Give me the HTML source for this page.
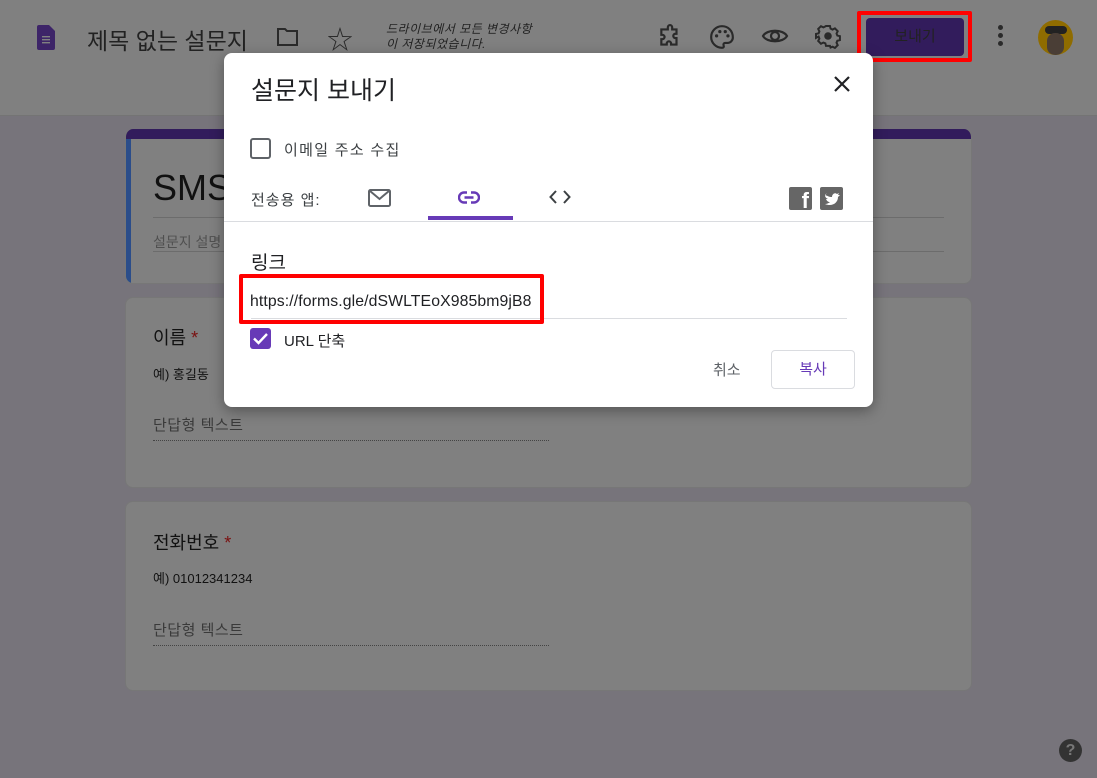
<!DOCTYPE html>
<html><head><meta charset="utf-8"><style>
*{box-sizing:border-box;margin:0;padding:0}
body{width:1097px;height:778px;overflow:hidden;background:#77747b;font-family:"Liberation Sans","Noto Sans CJK KR",sans-serif;position:relative;color:#202124}
.hdr{position:absolute;left:0;top:0;width:1097px;height:116px;background:#808080;border-bottom:1px solid #747474}
.abs{position:absolute}
.card{position:absolute;left:125px;width:847px;background:#808080;border-radius:8px;border:1px solid #777}
.dlg{position:absolute;left:224px;top:53px;width:649px;height:354px;background:#fff;border-radius:8px;box-shadow:0 4px 14px rgba(0,0,0,.35)}
</style></head><body>
<div class="hdr">
  <svg class="abs" style="left:37px;top:25px" width="18" height="25" viewBox="0 0 18 25"><path d="M2 0h10l6 6v17a2 2 0 0 1-2 2H2a2 2 0 0 1-2-2V2a2 2 0 0 1 2-2z" fill="#3d2468"/><g fill="#808080"><rect x="5" y="11" width="8" height="1.4"/><rect x="5" y="14" width="8" height="1.4"/><rect x="5" y="17" width="8" height="1.4"/></g></svg>
  <div class="abs" style="left:87px;top:22px;font-size:23px;color:#222">제목 없는 설문지</div>
  <svg class="abs" style="left:276px;top:26px" width="24" height="22" viewBox="0 0 24 22"><path d="M2 3h7l2 2h10v14H2z" fill="none" stroke="#2a2a2a" stroke-width="2"/></svg>
  <div class="abs" style="left:327px;top:20px;font-size:26px;color:#2a2a2a">☆</div>
  <div class="abs" style="left:386px;top:22px;font-size:12px;font-style:italic;color:#222;line-height:15px;letter-spacing:.5px">드라이브에서 모든 변경사항<br>이 저장되었습니다.</div>
  <svg class="abs" style="left:657px;top:24px" width="26" height="26" viewBox="0 0 24 24"><path d="M10 3a2 2 0 0 1 4 0v2h4v4h-1a2 2 0 0 0 0 4h1v6h-5v-1a2 2 0 0 0-4 0v1H4v-5h1a2 2 0 0 0 0-4H4V5h6z" fill="none" stroke="#2a2a2a" stroke-width="2"/></svg>
  <svg class="abs" style="left:709px;top:24px" width="26" height="26" viewBox="0 0 24 24"><path d="M12 2a10 10 0 0 0 0 20c1.5 0 2-1 1.5-2s0-2.5 1.5-2.5H17a5 5 0 0 0 5-5C22 6 17.5 2 12 2z" fill="none" stroke="#2a2a2a" stroke-width="2"/><circle cx="7" cy="11" r="1.5" fill="#2a2a2a"/><circle cx="10" cy="7" r="1.5" fill="#2a2a2a"/><circle cx="15" cy="7" r="1.5" fill="#2a2a2a"/><circle cx="17.5" cy="11" r="1.5" fill="#2a2a2a"/></svg>
  <svg class="abs" style="left:761px;top:24px" width="28" height="24" viewBox="0 0 28 24"><path d="M2 12C6 5 22 5 26 12C22 19 6 19 2 12z" fill="none" stroke="#2a2a2a" stroke-width="2.2"/><circle cx="14" cy="12" r="4" fill="none" stroke="#2a2a2a" stroke-width="2.2"/></svg>
  <svg class="abs" style="left:815px;top:23px" width="26" height="26" viewBox="0 0 24 24"><path d="M10 2h4l.6 2.6 2 1 2.4-1.2 2.8 2.8-1.2 2.4.8 2 2.6.6v4l-2.6.6-.8 2 1.2 2.4-2.8 2.8-2.4-1.2-2 .8L14 22h-4l-.6-2.6-2-.8-2.4 1.2-2.8-2.8 1.2-2.4-.8-2L0 14v-4l2.6-.6.8-2-1.2-2.4 2.8-2.8 2.4 1.2 2-1z" transform="scale(.92) translate(1 1)" fill="none" stroke="#2a2a2a" stroke-width="2"/><circle cx="12" cy="12" r="3.5" fill="#2a2a2a"/></svg>
  <div class="abs" style="left:857px;top:11px;width:115px;height:51px;border:4px solid #f00;border-radius:2px"></div>
  <div class="abs" style="left:866px;top:18px;width:98px;height:38px;background:#321c5c;border-radius:4px;color:#222;font-size:15px;text-align:center;line-height:38px">보내기</div>
  <div class="abs" style="left:998px;top:25px;width:5px"><div style="width:5px;height:5px;border-radius:50%;background:#2a2a2a;margin-bottom:3px"></div><div style="width:5px;height:5px;border-radius:50%;background:#2a2a2a;margin-bottom:3px"></div><div style="width:5px;height:5px;border-radius:50%;background:#2a2a2a"></div></div>
  <div class="abs" style="left:1038px;top:20px;width:35px;height:35px;border-radius:50%;background:#8f6c00;overflow:hidden"><div style="position:absolute;left:7px;top:6px;width:22px;height:8px;background:#222;border-radius:4px"></div><div style="position:absolute;left:9px;top:13px;width:17px;height:22px;background:#4a3e36;border-radius:8px"></div></div>
</div>

<div class="card" style="top:129px;height:155px;border-top:none;overflow:hidden">
  <div style="position:absolute;left:0;top:0;width:100%;height:10px;background:#321c5c"></div>
  <div style="position:absolute;left:0;top:10px;width:5px;height:150px;background:#2b4d8a"></div>
  <div style="position:absolute;left:27px;top:38px;font-size:36px;color:#111">SMS</div>
  <div style="position:absolute;left:27px;top:88px;width:791px;border-top:1px solid #6c6c6c"></div>
  <div style="position:absolute;left:27px;top:103px;font-size:14px;color:#505050">설문지 설명</div>
  <div style="position:absolute;left:27px;top:122px;width:791px;border-top:1px solid #6c6c6c"></div>
</div>
<div class="card" style="top:297px;height:191px">
  <div class="abs" style="left:27px;top:26px;font-size:18px;color:#111">이름 <span style="color:#7a1010">*</span></div>
  <div class="abs" style="left:27px;top:66px;font-size:13px;color:#111">예) 홍길동</div>
  <div class="abs" style="left:27px;top:116px;font-size:15px;color:#3a3a3a;letter-spacing:.5px">단답형 텍스트</div>
  <div class="abs" style="left:27px;top:142px;width:396px;border-top:1px dotted #444"></div>
</div>
<div class="card" style="top:501px;height:190px">
  <div class="abs" style="left:27px;top:27px;font-size:18px;color:#111">전화번호 <span style="color:#7a1010">*</span></div>
  <div class="abs" style="left:27px;top:66px;font-size:13px;color:#111">예) 01012341234</div>
  <div class="abs" style="left:27px;top:117px;font-size:15px;color:#3a3a3a;letter-spacing:.5px">단답형 텍스트</div>
  <div class="abs" style="left:27px;top:143px;width:396px;border-top:1px dotted #444"></div>
</div>
<div class="abs" style="left:1059px;top:739px;width:23px;height:23px;border-radius:50%;background:#333;color:#777;font-weight:bold;font-size:16px;text-align:center;line-height:23px">?</div>

<div class="dlg">
  <div class="abs" style="left:27px;top:18px;font-size:25px;color:#202124">설문지 보내기</div>
  <svg class="abs" style="left:610px;top:23px" width="16" height="16" viewBox="0 0 16 16"><path d="M1 1L15 15M15 1L1 15" stroke="#202124" stroke-width="2.2"/></svg>
  <div class="abs" style="left:26px;top:85px;width:21px;height:21px;border:2px solid #5f6368;border-radius:3px"></div>
  <div class="abs" style="left:60px;top:86px;font-size:15px;color:#3c4043;letter-spacing:1.3px">이메일 주소 수집</div>
  <div class="abs" style="left:27px;top:136px;font-size:15px;color:#3c4043;letter-spacing:1px">전송용 앱:</div>
  <svg class="abs" style="left:144px;top:136px" width="23" height="18" viewBox="0 0 23 18"><rect x="1" y="1" width="21" height="16" rx="1.5" fill="none" stroke="#5f6368" stroke-width="2"/><path d="M2 2l9.5 8L21 2" fill="none" stroke="#5f6368" stroke-width="2"/></svg>
  <svg class="abs" style="left:234px;top:138px" width="22" height="13" viewBox="0 0 22 13"><path d="M9 1.5H6a5 5 0 0 0 0 10h3M13 1.5h3a5 5 0 0 1 0 10h-3M6.5 6.5h9" fill="none" stroke="#673ab7" stroke-width="2.4"/></svg>
  <div class="abs" style="left:204px;top:163px;width:85px;height:4px;background:#673ab7"></div>
  <svg class="abs" style="left:325px;top:137px" width="22" height="14" viewBox="0 0 22 14"><path d="M7 1L1.5 7 7 13M15 1l5.5 6-5.5 6" fill="none" stroke="#3c4043" stroke-width="2"/></svg>
  <div class="abs" style="left:565px;top:134px;width:23px;height:23px;background:#666;border-radius:2px;color:#fff;font-weight:bold;font-size:22px;text-align:right;line-height:28px;padding-right:3px;overflow:hidden">f</div>
  <svg class="abs" style="left:596px;top:134px" width="23" height="23" viewBox="0 0 23 23"><rect width="23" height="23" rx="2" fill="#666"/><path d="M5 7c2 2 4 3 7 3 0-3 3-5 5-3l2-1-1 2 2 0-2 2c0 6-6 10-13 7 2 0 4-1 5-2-2 0-3-1-4-3h2c-2-1-3-2-3-4l2 1c-1-1-2-3 0-2z" fill="#fff"/></svg>
  <div class="abs" style="left:0;top:168px;width:649px;border-top:1px solid #dadce0"></div>
  <div class="abs" style="left:27px;top:195px;font-size:19px;color:#202124">링크</div>
  <div class="abs" style="left:27px;top:265px;width:596px;border-top:1px solid #dadce0"></div>
  <div class="abs" style="left:15px;top:221px;width:305px;height:50px;border:4px solid #f00;border-radius:2px"></div>
  <div class="abs" style="left:26px;top:240px;font-size:15.8px;color:#202124;letter-spacing:.1px">https://forms.gle/dSWLTEoX985bm9jB8</div>
  <div class="abs" style="left:26px;top:275px;width:21px;height:21px;background:#673ab7;border-radius:3px"><svg width="21" height="21" viewBox="0 0 21 21"><path d="M4 10.5l4.5 4.5L17 6" fill="none" stroke="#fff" stroke-width="2.4"/></svg></div>
  <div class="abs" style="left:60px;top:277px;font-size:15px;color:#202124">URL 단축</div>
  <div class="abs" style="left:489px;top:306px;font-size:15px;color:#5f6368">취소</div>
  <div class="abs" style="left:547px;top:297px;width:84px;height:39px;border:1px solid #dadce0;border-radius:4px;color:#673ab7;font-size:15px;text-align:center;line-height:37px">복사</div>
</div>
</body></html>
